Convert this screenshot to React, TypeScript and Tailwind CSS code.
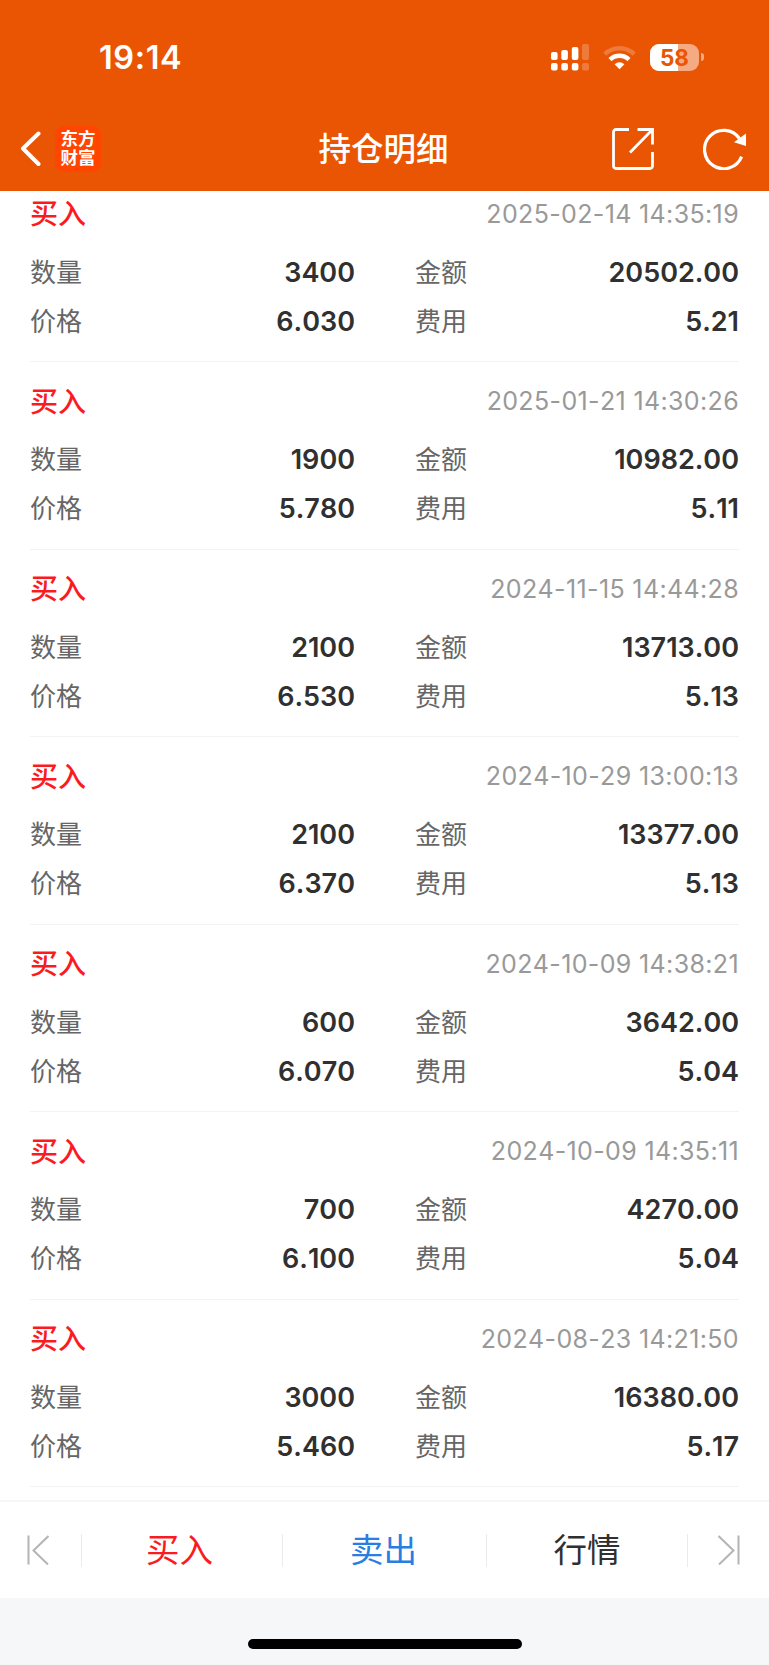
const trades = [
  { time: '2025-02-14 14:35:19', amount: '3400', total: '20502.00', price: '6.030', fee: '5.21' },
  { time: '2025-01-21 14:30:26', amount: '1900', total: '10982.00', price: '5.780', fee: '5.11' },
  { time: '2024-11-15 14:44:28', amount: '2100', total: '13713.00', price: '6.530', fee: '5.13' },
  { time: '2024-10-29 13:00:13', amount: '2100', total: '13377.00', price: '6.370', fee: '5.13' },
  { time: '2024-10-09 14:38:21', amount: '600', total: '3642.00', price: '6.070', fee: '5.04' },
  { time: '2024-10-09 14:35:11', amount: '700', total: '4270.00', price: '6.100', fee: '5.04' },
  { time: '2024-08-23 14:21:50', amount: '3000', total: '16380.00', price: '5.460', fee: '5.17' },
];

type Trade = (typeof trades)[number];

function StatusBar() {
  return (
    <div className="flex h-[106px] items-center justify-between pt-2 pr-[65px] pl-[99px]">
      <span className="pt-[3px] text-[32.5px] leading-none font-semibold tracking-[0.6px] [font-kerning:none]">19:14</span>
      <div className="flex items-center">
        <svg width="38" height="28" viewBox="0 0 38 28" fill="currentColor">
          <rect x="0" y="9" width="6.6" height="8" rx="2" />
          <rect x="10.3" y="7" width="6.6" height="10" rx="2" />
          <rect x="20.8" y="4" width="6.6" height="13" rx="2" />
          <rect x="31" y="1" width="7" height="16" rx="2" opacity=".22" />
          <rect x="0" y="20" width="6.6" height="7.5" rx="2" />
          <rect x="10.3" y="20" width="6.6" height="7.5" rx="2" />
          <rect x="20.8" y="20" width="6.6" height="7.5" rx="2" />
          <rect x="31" y="20" width="7" height="7.5" rx="2" opacity=".22" />
        </svg>
        <svg className="ml-[14px]" width="33" height="26" viewBox="0 0 33 26" fill="none" stroke="currentColor">
          <path d="M1.7 10.2A21.3 21.3 0 0 1 31.3 10.2" strokeWidth="4.4" opacity=".22" />
          <path d="M7 15.6A13.6 13.6 0 0 1 26 15.6" strokeWidth="4.4" />
          <path d="M16.5 25.3 11.6 20.3A7 7 0 0 1 21.4 20.3Z" fill="currentColor" stroke="none" />
        </svg>
        <div className="relative ml-[14px] flex h-[27px] w-[49px] items-center justify-center overflow-hidden rounded-[9px] bg-white/50">
          <div className="absolute inset-y-0 left-0 w-[28px] bg-white" />
          <span className="relative pt-[2px] text-[22.5px] leading-none font-bold text-[#ea5504]">58</span>
        </div>
        <div className="ml-[2px] h-[8px] w-[3px] rounded-r-full bg-white/50" />
      </div>
    </div>
  );
}

function NavBar() {
  return (
    <div className="grid h-[85px] grid-cols-3 items-center">
      <div className="flex items-center pl-[20px]">
        <svg width="21" height="36" viewBox="0 0 21 36" fill="none" stroke="currentColor" strokeWidth="4" strokeLinecap="round" strokeLinejoin="round">
          <path d="M18.5 2.5 3 17.5 18.5 33" />
        </svg>
        <div className="ml-[14px] flex h-[46px] w-[46px] flex-col items-center justify-center rounded-[9px] bg-[#ff4500] pb-px text-[17.5px] leading-[19px] font-bold">
          <span>东方</span>
          <span>财富</span>
        </div>
      </div>
      <h1 className="pt-[3px] pr-[2px] text-center text-[32.5px] leading-none font-medium">持仓明细</h1>
      <div className="flex items-center justify-end gap-[49px] pr-[22px]">
        <svg width="42" height="42" viewBox="0 0 42 42" fill="none" stroke="currentColor" strokeWidth="2.8">
          <path d="M17 1.5H4A2.5 2.5 0 0 0 1.5 4V38A2.5 2.5 0 0 0 4 40.5H38A2.5 2.5 0 0 0 40.5 38V24" />
          <path d="M25.5 1.5H40.5V16.5M40 2 18 24.5" />
        </svg>
        <svg width="44" height="42" viewBox="0 0 44 42" fill="none" stroke="currentColor" strokeWidth="3.2">
          <path d="M38.6 28.6A19.2 19.2 0 1 1 36.5 10.5" />
          <path d="M43 5.5V18L31 14.2Z" fill="currentColor" stroke="none" />
        </svg>
      </div>
    </div>
  );
}

function Field({ label, value }: { label: string; value: string }) {
  return (
    <div className="flex h-[49px] items-center justify-between">
      <span className="text-[26px] text-[#666]">{label}</span>
      <span className="pt-[2px] text-[27px] font-semibold text-[#303030] [font-kerning:none]">{value}</span>
    </div>
  );
}

function TradeItem({ trade }: { trade: Trade }) {
  return (
    <li className="h-[187.5px] border-b border-[#f3f3f3] pt-[15px]">
      <div className="mb-[8px] flex h-[50px] items-center justify-between">
        <span className="pb-px text-[28px] font-medium text-[#fb1b1f]">买入</span>
        <time className="text-[25px] tracking-[0.36px] text-[#999] [font-kerning:none]">{trade.time}</time>
      </div>
      <div className="grid grid-cols-[325px_1fr] gap-x-[60px]">
        <Field label="数量" value={trade.amount} />
        <Field label="金额" value={trade.total} />
        <Field label="价格" value={trade.price} />
        <Field label="费用" value={trade.fee} />
      </div>
    </li>
  );
}

function Divider() {
  return <div className="h-[33px] w-px bg-[#ebebeb]" />;
}

function BottomBar() {
  return (
    <nav className="flex h-[98px] shrink-0 items-center border-t-2 border-[#f6f6f8] bg-white text-[33.5px]">
      <button className="flex w-[81px] pl-[27px] text-[#b4b4b4]">
        <svg width="22" height="30" viewBox="0 0 22 30" fill="none" stroke="currentColor" strokeWidth="2">
          <path d="M1.5 .5V29.5M21.5 1 6.5 15.5 21 29.5" />
        </svg>
      </button>
      <Divider />
      <button className="w-[200px] pt-px pr-[5px] text-[#fb1b1f]">买入</button>
      <Divider />
      <button className="w-[203px] pt-px pr-[2px] text-[#2a7de1]">卖出</button>
      <Divider />
      <button className="w-[200px] pt-px text-[#303030]">行情</button>
      <Divider />
      <button className="flex flex-1 justify-end pr-[29px] text-[#b4b4b4]">
        <svg width="22" height="30" viewBox="0 0 22 30" fill="none" stroke="currentColor" strokeWidth="2">
          <path d="M20.5 .5V29.5M.5 1 15.5 15.5 1 29.5" />
        </svg>
      </button>
    </nav>
  );
}

export default function App() {
  return (
    <div className="flex h-[1665px] w-[769px] flex-col overflow-hidden bg-white font-['Inter','Noto_Sans_CJK_SC',sans-serif]">
      <header className="h-[191px] shrink-0 bg-[#ea5504] text-white">
        <StatusBar />
        <NavBar />
      </header>
      <main className="h-[1309px] shrink-0 overflow-hidden px-[30px]">
        <ul className="-mt-[16.5px]">
          {trades.map((trade) => (
            <TradeItem key={trade.time} trade={trade} />
          ))}
        </ul>
      </main>
      <BottomBar />
      <div className="flex flex-1 items-end justify-center bg-[#f6f7f9] pb-[16px]">
        <div className="h-[10px] w-[274px] rounded-full bg-black" />
      </div>
    </div>
  );
}
